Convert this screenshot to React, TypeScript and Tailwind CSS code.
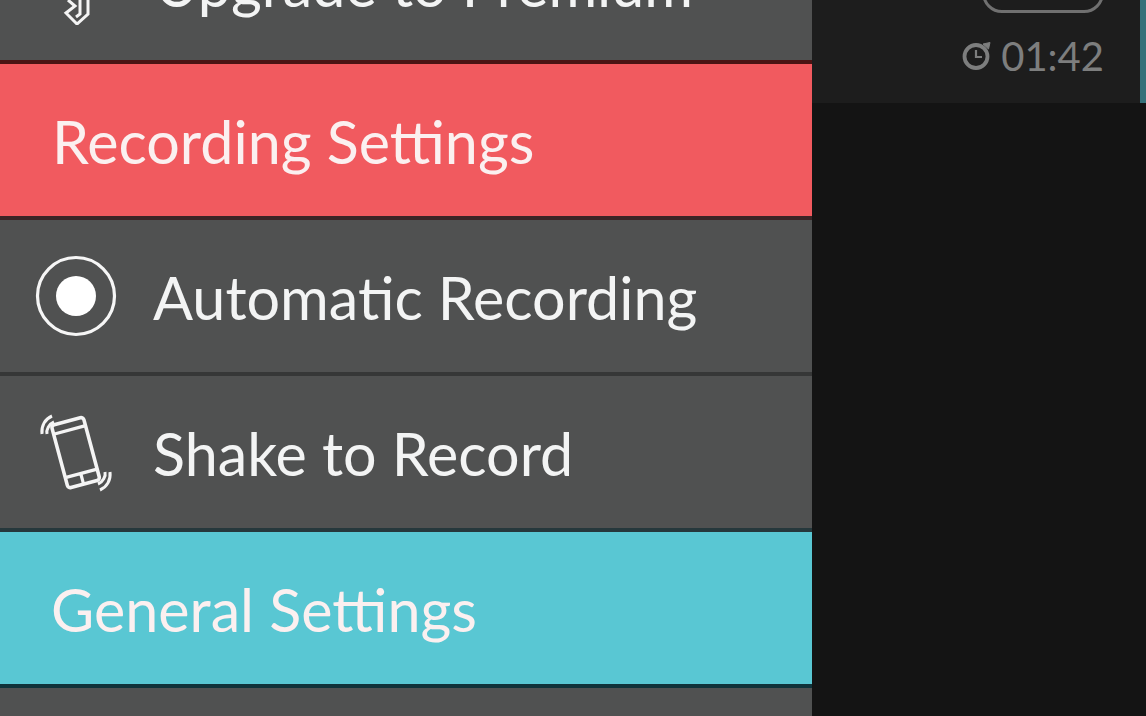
const font = { fontFamily: '"Lato", "Open Sans", sans-serif' };

function Radio() {
  return (
    <svg width="84" height="84" viewBox="0 0 84 84" className="block">
      <circle cx="42" cy="42" r="38.5" fill="none" stroke="#f6f6f6" strokeWidth="3.2" />
      <circle cx="42" cy="42" r="20" fill="#fff" />
    </svg>
  );
}

function Shake() {
  return (
    <svg width="80" height="84" viewBox="0 0 80 84" fill="none" stroke="#f4f4f4" className="block">
      <g transform="rotate(-15 42 42)">
        <rect x="25" y="10" width="33" height="65" rx="3" strokeWidth="3.6" />
        <path d="M25 19H58M25 64H58M41 64V75" strokeWidth="3.2" />
      </g>
      <path d="M8 24C7 16 11 9 18 6M13 24C12 20 15 14 20 12" strokeWidth="3" />
      <path d="M76 62C77 70 73 77 66 80M71 62C72 66 69 72 64 74" strokeWidth="3" />
    </svg>
  );
}

function Row({ icon, label, border }: { icon: React.ReactNode; label: string; border: string }) {
  return (
    <div className={`h-[152px] bg-[#505151] border-b-4 box-content flex items-center ${border}`}>
      <div className="w-[153px] pl-[34px] shrink-0">{icon}</div>
      <span className="text-[59.25px] leading-[60px] mt-[4px] text-[#f3f4f4]">{label}</span>
    </div>
  );
}

function Header({ bg, border, label, pad }: { bg: string; border: string; label: string; pad: string }) {
  return (
    <div className={`h-[152px] box-content border-b-4 flex items-center ${pad} ${bg} ${border}`}>
      <span className="text-[59.25px] leading-[60px] mt-[4px] text-[#fbf0f0]">{label}</span>
    </div>
  );
}

export default function App() {
  return (
    <div style={font} className="w-[1146px] h-[716px] overflow-hidden flex bg-[#141414]">
      <div className="w-[812px] shrink-0 flex flex-col overflow-hidden">
        <div className="h-[60px] box-content border-b-4 border-[#4a1414] bg-[#505151] overflow-hidden shrink-0">
          <div className="flex items-end h-[60px] -mt-[46px]">
            <div className="w-[155px] pl-[62px] shrink-0 -mb-[11px]">
              <svg width="30" height="72" viewBox="0 0 30 72" fill="none" stroke="#f4f4f4" strokeWidth="3" className="block">
                <path d="M6 47L13 53L4 60L15 71L26 61V47" />
                <path d="M18 47V61L14 64" />
              </svg>
            </div>
            <span className="text-[59.25px] leading-[60px] -mb-[1px] text-[#f3f4f4]">Upgrade to Premium</span>
          </div>
        </div>
        <Header bg="bg-[#f15a5f]" border="border-[#3b2426]" label="Recording Settings" pad="pl-[52px]" />
        <Row icon={<Radio />} label="Automatic Recording" border="border-[#363737]" />
        <Row icon={<Shake />} label="Shake to Record" border="border-[#26383c]" />
        <Header bg="bg-[#59c7d3]" border="border-[#10333a]" label="General Settings" pad="pl-[51px]" />
        <div className="flex-1 bg-[#505151]" />
      </div>
      <div className="flex-1 flex flex-col">
        <div className="h-[103px] bg-[#1d1d1d] flex shrink-0 overflow-hidden">
          <div className="flex-1 flex flex-col items-end pr-[36px]">
            <div className="w-[122px] h-[40px] -mt-[27px] rounded-[20px] border-[3px] border-[#707070] shrink-0" />
            <div className="flex items-center gap-[9px] mt-[24px] h-[38px] text-[#7d7e7e]">
              <svg width="30" height="30" viewBox="0 0 30 30" fill="none" stroke="#7d7e7e" strokeWidth="3.8" className="block -mt-[2px]">
                <circle cx="14" cy="16.5" r="11.5" />
                <path d="M14 10V17H20" strokeWidth="2.2" />
                <path d="M21 4L28 2.5L26.5 9Z" fill="#7d7e7e" strokeWidth="1" />
              </svg>
              <span className="text-[40px] leading-none">01:42</span>
            </div>
          </div>
          <div className="w-[6px] bg-[#35717a]" />
        </div>
      </div>
    </div>
  );
}
